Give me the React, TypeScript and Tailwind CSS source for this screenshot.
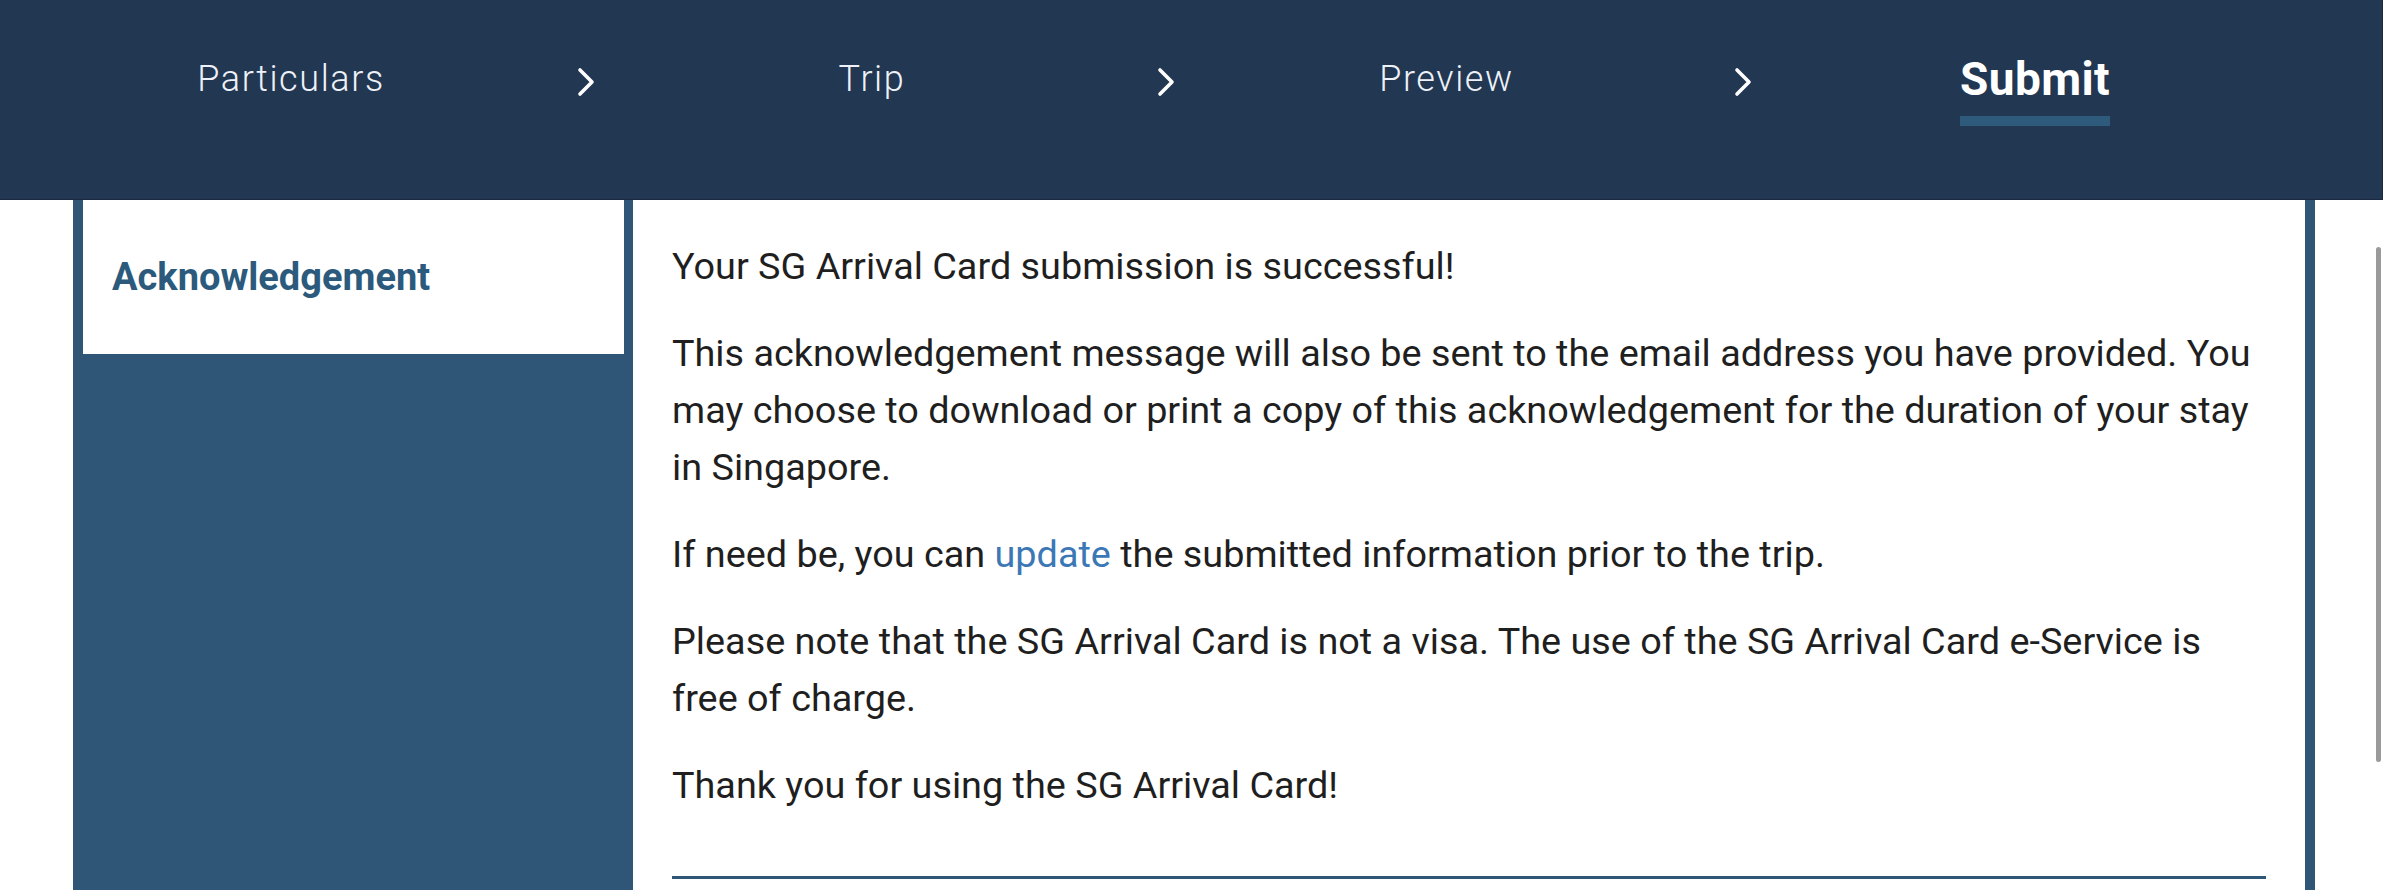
import React from 'react';

const steps = [
  { label: 'Particulars', width: 'w-[570px]', shift: '' },
  { label: 'Trip', width: 'w-[552px]', shift: 'translate-x-[8px]' },
  { label: 'Preview', width: 'w-[557px]', shift: 'translate-x-[8px]' },
];

function Chevron({ shift }: { shift: string }) {
  return (
    <div className={`w-[20px] flex justify-center pt-[6px] ${shift}`}>
      <svg width="18" height="30" viewBox="0 0 18 30" fill="none">
        <polyline
          points="3,3 15,15 3,27"
          stroke="#ffffff"
          strokeWidth="3.6"
          strokeLinecap="round"
          strokeLinejoin="round"
        />
      </svg>
    </div>
  );
}

export default function App() {
  return (
    <div className="relative w-[2388px] h-[890px] overflow-hidden bg-white font-['Roboto','Liberation_Sans',sans-serif]">
      {/* Step header */}
      <header className="w-[2383px] h-[200px] pt-[49px] bg-[#223752] border-b border-r border-[#1b2a40]">
        <nav className="flex items-center h-[60px] pl-[6px]">
          {steps.map((step) => (
            <React.Fragment key={step.label}>
              <div className={`${step.width} text-center text-[36px] leading-[44px] font-light tracking-[1.6px] text-[#eef2f8]`}>
                {step.label}
              </div>
              <Chevron shift={step.shift} />
            </React.Fragment>
          ))}
          <div className="w-[580px] flex justify-center">
            <span className="relative inline-block text-[46px] leading-[54px] font-bold tracking-[0.4px] text-white">
              Submit
              <span className="absolute left-0 right-0 top-[64px] h-[10px] bg-[#2e5a7c]" />
            </span>
          </div>
        </nav>
      </header>

      {/* Body */}
      <div className="pl-[73px]">
        <div className="w-[2242px] h-[690px] flex border-x-[10px] border-[#2f5676]">
          {/* Sidebar */}
          <aside className="w-[550px] bg-[#2f5676] pr-[9px]">
            <div className="h-[154px] bg-white flex items-center pl-[29px]">
              <span className="text-[38px] font-bold text-[#2b5a7c]">Acknowledgement</span>
            </div>
          </aside>

          {/* Content */}
          <main className="flex-1 bg-white px-[39px] pt-[38px] text-[37.8px] leading-[57px] text-[#1f1f1f]">
            <p className="mb-[30px]">Your SG Arrival Card submission is successful!</p>
            <p className="mb-[30px]">
              This acknowledgement message will also be sent to the email address you have provided. You may choose to download or print a copy of this acknowledgement for the duration of your stay in Singapore.
            </p>
            <p className="mb-[30px]">
              If need be, you can <a className="text-[#3b78b5]">update</a> the submitted information prior to the trip.
            </p>
            <p className="mb-[30px]">
              Please note that the SG Arrival Card is not a visa. The use of the SG Arrival Card e-Service is
              <br />
              free of charge.
            </p>
            <p>Thank you for using the SG Arrival Card!</p>
            <div className="mt-[62px] h-[3px] bg-[#2e5676]" />
          </main>
        </div>
      </div>

      {/* Overlay scrollbar */}
      <div className="absolute left-[2376px] top-[247px] w-[5px] h-[515px] rounded-full bg-[#9a9a9a]" />
    </div>
  );
}
